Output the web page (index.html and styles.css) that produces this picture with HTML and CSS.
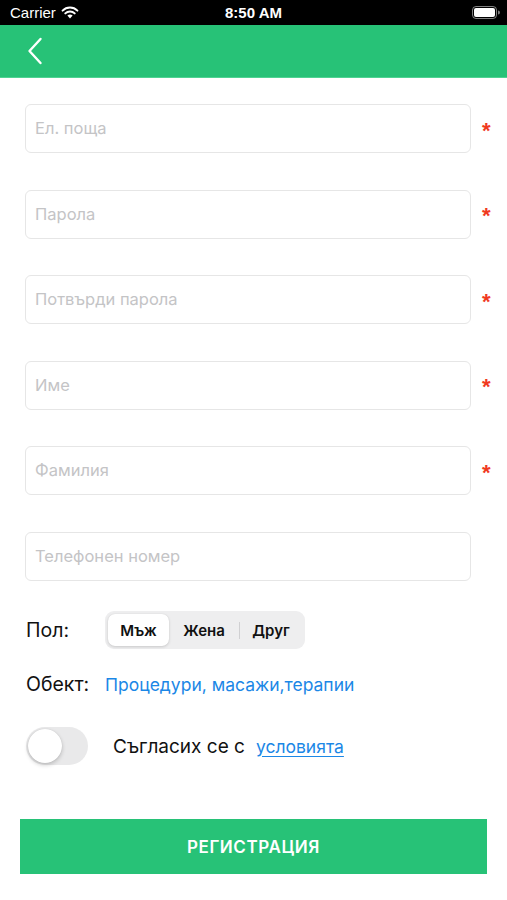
FILE: index.html
```html
<!DOCTYPE html>
<html lang="bg">
<head>
<meta charset="utf-8">
<link rel="stylesheet" href="styles.css">
</head>
<body>
<div class="status">
  <div class="status-left">
    <span>Carrier</span>
    <svg class="wifi" width="18" height="13" viewBox="0 0 18 13"><path d="M9 12.5 L6.4 9.6 A3.8 3.8 0 0 1 11.6 9.6 Z" fill="#fff"/><path d="M4.3 7.4 A6.6 6.6 0 0 1 13.7 7.4" stroke="#fff" stroke-width="2" fill="none" stroke-linecap="round"/><path d="M1.6 4.6 A10.4 10.4 0 0 1 16.4 4.6" stroke="#fff" stroke-width="2" fill="none" stroke-linecap="round"/></svg>
  </div>
  <div class="status-time">8:50 AM</div>
  <div class="status-right">
    <svg width="28" height="13" viewBox="0 0 28 13"><rect x="0.5" y="0.5" width="24" height="12" rx="3.5" fill="none" stroke="#fff" stroke-opacity="0.5"/><rect x="2" y="2" width="21" height="9" rx="2" fill="#fff"/><path d="M26 4.5 a1.8 1.8 0 0 1 0 4 z" fill="#fff" fill-opacity="0.5"/></svg>
  </div>
</div>
<header class="nav">
  <svg class="back" width="16" height="28" viewBox="0 0 16 28"><path d="M13.5 2 L2.5 14 L13.5 26" stroke="#fff" stroke-width="2.4" fill="none" stroke-linecap="round" stroke-linejoin="round"/></svg>
</header>
<main class="form">
  <div class="field-row"><div class="field">Ел. поща</div><span class="req">*</span></div>
  <div class="field-row"><div class="field">Парола</div><span class="req">*</span></div>
  <div class="field-row"><div class="field">Потвърди парола</div><span class="req">*</span></div>
  <div class="field-row"><div class="field">Име</div><span class="req">*</span></div>
  <div class="field-row"><div class="field">Фамилия</div><span class="req">*</span></div>
  <div class="field-row"><div class="field">Телефонен номер</div></div>

  <div class="gender-row">
    <span class="label">Пол:</span>
    <div class="segmented">
      <span class="seg selected">Мъж</span>
      <span class="seg seg-mid">Жена</span>
      <span class="sep"></span>
      <span class="seg seg-last">Друг</span>
    </div>
  </div>

  <div class="object-row">
    <span class="label">Обект:</span>
    <span class="link">Процедури, масажи,терапии</span>
  </div>

  <div class="terms-row">
    <span class="switch"><span class="knob"></span></span>
    <span class="terms-text">Съгласих се с</span>
    <span class="link underline">условията</span>
  </div>

  <button class="submit">РЕГИСТРАЦИЯ</button>
</main>
</body>
</html>
```
FILE: styles.css
```css
* { box-sizing: border-box; }
html, body { margin: 0; padding: 0; background: #fff; }
body {
  width: 507px;
  font-family: Inter, "Noto Sans", "Liberation Sans", sans-serif;
  color: #111;
}
.status {
  height: 25px;
  background: #000;
  color: #fff;
  display: flex;
  align-items: center;
  justify-content: space-between;
  padding: 0 7px 0 10px;
  font-size: 15px;
  font-family: "Liberation Sans", Arial, sans-serif;
  position: relative;
}
.status-left { display: flex; align-items: center; gap: 5px; }
.status-time {
  position: absolute;
  left: 0; right: 0;
  text-align: center;
  font-weight: bold;
  font-size: 15px;
}
.status-right { display: flex; align-items: center; }
.nav {
  height: 53px;
  background: #27c277;
  display: flex;
  align-items: center;
  padding-left: 27px;
  border-bottom: 1px solid #4fd392;
}
.form {
  padding: 26px 0 0 0;
  display: flex;
  flex-direction: column;
}
.field-row {
  display: flex;
  align-items: center;
  height: 49px;
  margin-bottom: 36.5px;
  padding-left: 25px;
}
.field {
  width: 446px;
  height: 49px;
  border: 1px solid #e6e6e6;
  border-radius: 6px;
  display: flex;
  align-items: center;
  padding-left: 9px;
  padding-bottom: 1px;
  font-size: 16.5px;
  color: #c4c4c6;
}
.req {
  color: #f0391f;
  font-size: 22px;
  font-weight: bold;
  margin-left: 11px;
  margin-top: 4px;
  font-family: "Liberation Sans", Arial, sans-serif;
}
.label { font-size: 19.5px; color: #111; }
.gender-row {
  display: flex;
  align-items: center;
  padding-left: 26px;
  margin-top: -6px;
  height: 38px;
}
.gender-row .label { width: 79px; }
.segmented {
  width: 200px;
  height: 38px;
  background: #eeeeef;
  border-radius: 9px;
  display: flex;
  align-items: center;
  padding: 3px;
}
.seg {
  height: 32px;
  display: flex;
  align-items: center;
  justify-content: center;
  font-size: 15px;
  font-weight: 600;
  color: #111;
  width: 62px;
}
.seg-mid { width: 70px; }
.seg.selected {
  background: #fff;
  border-radius: 7px;
  box-shadow: 0 1px 3px rgba(0,0,0,0.15), 0 0 1px rgba(0,0,0,0.1);
  width: 61px;
}
.sep { width: 1px; height: 17px; background: #d0d0d2; }
.object-row {
  display: flex;
  align-items: center;
  padding-left: 26px;
  margin-top: 24px;
  height: 22px;
}
.object-row .label { width: 79px; }
.link { color: #1b87e6; font-size: 17.5px; }
.underline { text-decoration: underline; text-underline-offset: 3px; }
.terms-row {
  display: flex;
  align-items: center;
  padding-left: 26px;
  margin-top: 32px;
  height: 38px;
}
.switch {
  width: 62px;
  height: 38px;
  background: #e9e9ea;
  border-radius: 19px;
  position: relative;
  display: inline-block;
}
.knob {
  position: absolute;
  left: 2px; top: 2px;
  width: 34px; height: 34px;
  border-radius: 50%;
  background: #fff;
  box-shadow: 0 2px 4px rgba(0,0,0,0.2), 0 0 1px rgba(0,0,0,0.15);
}
.terms-text { font-size: 19px; margin-left: 25px; margin-right: 11px; }
.submit {
  margin: 54px 0 0 20px;
  width: 467px;
  height: 55px;
  background: #27c277;
  border: none;
  color: #fff;
  font-family: Inter, "Liberation Sans", Arial, sans-serif;
  font-size: 17px;
  font-weight: 600;
  letter-spacing: 0.6px;
  padding: 0;
}
```
